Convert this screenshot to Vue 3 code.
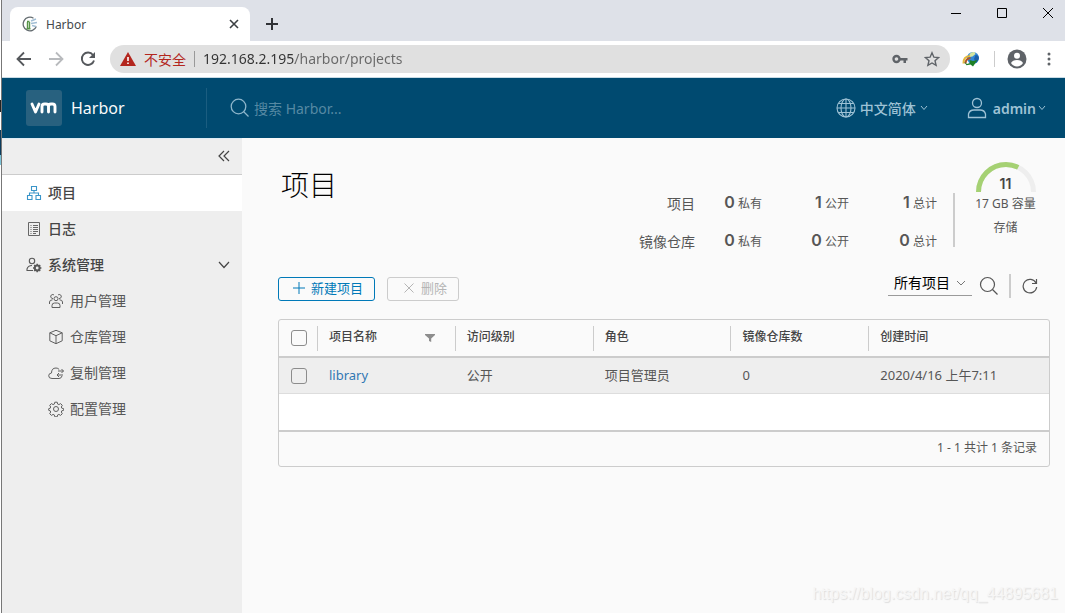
<script setup>
import { ref } from 'vue'

const address = ref('192.168.2.195/harbor/projects')
const keyword = ref('')
const filter = ref('all')

const subItems = [
  { id: 'users', label: '用户管理' },
  { id: 'registry', label: '仓库管理' },
  { id: 'replication', label: '复制管理' },
  { id: 'config', label: '配置管理' }
]

const stats = [
  { label: '项目', counts: [[0, '私有'], [1, '公开'], [1, '总计']] },
  { label: '镜像仓库', counts: [[0, '私有'], [0, '公开'], [0, '总计']] }
]

const columns = ['项目名称', '访问级别', '角色', '镜像仓库数', '创建时间']
const projects = [
  { name: 'library', access: '公开', role: '项目管理员', repos: 0, created: '2020/4/16 上午7:11' }
]
</script>

<template>
  <div class="window">
    <div class="edge"></div>
    <div class="browser">
      <div class="tabstrip">
        <div class="tab">
          <svg class="favicon" width="16" height="16" viewBox="0 0 16 16" fill="none">
            <path d="M14.300 10.500A6.800 6.800 0 1 1 11.500 2.200" stroke="#666e72" stroke-width="1.300" />
            <path d="M5 5.500h2.500M5.500 6v6.500h2V6M4.500 12.800h4" stroke="#579448" stroke-width="1.400" />
            <path d="M9 5l5-2M9 7.500l6-1M10 9.500l4 1" stroke="#a3bfd5" stroke-width="1.500" />
          </svg>
          <span class="tab-title">Harbor</span>
          <button class="plain" aria-label="关闭标签页">
            <svg width="10" height="10" viewBox="0 0 10 10" stroke="#3c4043" stroke-width="1.600"><path d="M1 1l8 8M9 1L1 9" /></svg>
          </button>
        </div>
        <button class="plain new-tab" aria-label="新标签页">
          <svg width="12" height="12" viewBox="0 0 12 12" stroke="#303236" stroke-width="2"><path d="M6 0v12M0 6h12" /></svg>
        </button>
        <div class="window-buttons">
          <button class="plain" aria-label="最小化"><svg width="12" height="12" viewBox="0 0 12 12" stroke="#000"><path d="M1 6.500h10" /></svg></button>
          <button class="plain" aria-label="最大化"><svg width="12" height="12" viewBox="0 0 12 12" fill="none" stroke="#000"><path d="M1.500 1.500h9v9h-9z" /></svg></button>
          <button class="plain" aria-label="关闭"><svg width="12" height="12" viewBox="0 0 12 12" stroke="#000"><path d="M1 1l10 10M11 1L1 11" /></svg></button>
        </div>
      </div>

      <div class="toolbar">
        <button class="plain" aria-label="后退">
          <svg width="16" height="16" viewBox="0 0 16 16" fill="none" stroke="#55585c" stroke-width="1.800"><path d="M15 8H2M8 1.500L1.500 8 8 14.500" /></svg>
        </button>
        <button class="plain" aria-label="前进">
          <svg width="16" height="16" viewBox="0 0 16 16" fill="none" stroke="#b8babd" stroke-width="1.800"><path d="M1 8h13M8 1.500L14.500 8 8 14.500" /></svg>
        </button>
        <button class="plain" aria-label="重新加载">
          <svg width="16" height="16" viewBox="0 0 16 16"><path d="M13 4A6.200 6.200 0 1 0 14 9.500" fill="none" stroke="#55585c" stroke-width="1.900" /><path d="M15 1v6H9z" fill="#55585c" /></svg>
        </button>
        <div class="omnibox">
          <svg width="16" height="14" viewBox="0 0 16 14"><path d="M8 0l8 14H0z" fill="#b3261e" /><path d="M8 5v4M8 10.500v1.600" stroke="#fff" stroke-width="1.600" /></svg>
          <span class="insecure">不安全</span>
          <input class="address" v-model="address" aria-label="地址栏" />
          <svg width="16" height="10" viewBox="0 0 16 10"><circle cx="4.500" cy="5" r="3" fill="none" stroke="#5f6368" stroke-width="2.400" /><path d="M8 4h7.500v2.400H14V9h-2.500V6.400H8z" fill="#5f6368" /></svg>
          <button class="plain" aria-label="收藏">
            <svg width="16" height="16" viewBox="0 0 16 16" fill="none" stroke="#5f6368" stroke-width="1.400"><path d="M8 1.800l1.900 4.400 4.700.4-3.600 3.100 1.100 4.700L8 12l-4.100 2.400L5 9.700 1.400 6.600l4.700-.4z" /></svg>
          </button>
        </div>
        <svg class="extension" width="18" height="16" viewBox="0 0 18 16">
          <circle cx="11" cy="7" r="6" fill="#2f86d6" />
          <path d="M7.500 3q2-2.500 5-2l1 2-3 2.500-3 .5z" fill="#d3e4a0" />
          <path d="M13.500 4q3 0 3.500 3-.5 3-3 4.500l-2-3.500z" fill="#1c5fa8" />
          <path d="M1.500 12.500Q1 5.500 8 5" fill="none" stroke="#e4b83b" stroke-width="2" />
          <path d="M3.500 12.500Q3.500 7.500 8.500 7" fill="none" stroke="#b05425" stroke-width="2" />
          <path d="M2 10.500l3 2.500 3-1-.5-3 3.500 1 4.500-1-4.500 6.500-2.500-2-4 .8z" fill="#1d7f25" />
        </svg>
        <span class="tool-divider"></span>
        <button class="plain profile" aria-label="用户资料">
          <svg width="20" height="20" viewBox="0 0 20 20"><circle cx="10" cy="10" r="9.500" fill="#5f6368" /><circle cx="10" cy="6.700" r="3" fill="#fff" /><path d="M4 14q1.500-3 6-3t6 3a7 7 0 0 1-12 0" fill="#fff" /></svg>
        </button>
        <button class="plain menu" aria-label="浏览器菜单">
          <svg width="4" height="14" viewBox="0 0 4 14" fill="#5f6368"><circle cx="2" cy="2" r="1.500" /><circle cx="2" cy="7" r="1.500" /><circle cx="2" cy="12" r="1.500" /></svg>
        </button>
      </div>

      <header class="header">
        <a class="brand" href="#">
          <span class="logo">
            <svg width="28" height="14" viewBox="0 0 28 14" fill="none" stroke="#fff" stroke-width="2.900" stroke-linecap="round" stroke-linejoin="round">
              <path d="M2 3l3.500 8L9 3M12 11V5.500Q12 3 14.500 3H16q2.500 0 2.500 2.500V11M18.500 5.500Q18.500 3 21 3h1.500Q25 3 25 5.500V11" />
            </svg>
          </span>
          <span>Harbor</span>
        </a>
        <label class="search">
          <svg width="20" height="20" viewBox="0 0 20 20" fill="none" stroke="#8eb6cb" stroke-width="1.300"><circle cx="8.500" cy="8.500" r="7.300" /><path d="M13.500 13.500l5 5" /></svg>
          <input v-model="keyword" placeholder="搜索 Harbor..." aria-label="搜索 Harbor" />
        </label>
        <button class="plain head-menu">
          <svg width="20" height="20" viewBox="0 0 20 20" fill="none" stroke="#9ec2d5" stroke-width="1.100"><circle cx="10" cy="10" r="9" /><ellipse cx="10" cy="10" rx="5" ry="9" /><path d="M10 1v18M1 10h18M2.500 5.500h15M2.500 14.500h15" /></svg>
          <span>中文简体</span>
          <svg width="8" height="6" viewBox="0 0 8 6" fill="none" stroke="#9ec2d5"><path d="M1 1l3 3.500L7 1" /></svg>
        </button>
        <button class="plain head-menu admin">
          <svg width="20" height="22" viewBox="0 0 20 22" fill="none" stroke="#9ec2d5" stroke-width="1.300"><circle cx="10" cy="6" r="4.500" /><path d="M1.500 20.500V17q1-4 5.500-4h6q4.500 0 5.500 4v3.500z" /></svg>
          <span class="user-name">admin</span>
          <svg width="8" height="6" viewBox="0 0 8 6" fill="none" stroke="#9ec2d5"><path d="M1 1l3 3.500L7 1" /></svg>
        </button>
      </header>

      <div class="content">
        <nav class="sidebar">
          <div class="collapse">
            <button class="plain" aria-label="收起导航">
              <svg width="12" height="12" viewBox="0 0 12 12" fill="none" stroke="#444" stroke-width="1.200"><path d="M6 1L1 6l5 5M11 1L6 6l5 5" /></svg>
            </button>
          </div>
          <a class="item active" href="#">
            <svg width="16" height="16" viewBox="0 0 16 16" fill="none" stroke="#3a95c9" stroke-width="1.100"><path d="M5.500 1.500h5v4h-5zM1.500 10.500h4.500v4H1.500zM10 10.500h4.500v4H10zM8 5.500V8M3.500 10V8h9v2" /></svg>
            <span>项目</span>
          </a>
          <a class="item" href="#">
            <svg width="16" height="16" viewBox="0 0 16 16" fill="none" stroke="#666"><path d="M2.500 1.500h11v13h-11zM4.500 4.500h1M7 4.500h5M4.500 6.500h1M7 6.500h5M4.500 8.500h1M7 8.500h5M4.500 10.500h1M7 10.500h5M4.500 12.500h1M7 12.500h3" /></svg>
            <span>日志</span>
          </a>
          <button class="plain item">
            <svg width="16" height="16" viewBox="0 0 16 16" fill="none" stroke="#595959" stroke-width="1.100"><circle cx="6" cy="4" r="2.700" /><path d="M7 13.500H1V12q1-3.500 5-3.500" /><circle cx="11.200" cy="11" r="2.400" stroke-width="2" /><path d="M11.200 6.800v2M11.200 13.200v2M7 11h2M13.400 11h2M8.200 8l1.400 1.400M12.800 12.600l1.400 1.400M14.200 8l-1.400 1.400M9.600 12.600L8.200 14" stroke-width="1.500" /></svg>
            <span class="item-name">系统管理</span>
            <svg width="12" height="8" viewBox="0 0 12 8" fill="none" stroke="#444" stroke-width="1.200"><path d="M1 1l5 5.500L11 1" /></svg>
          </button>
          <a v-for="s in subItems" :key="s.id" class="item sub" href="#">
            <svg width="16" height="16" viewBox="0 0 16 16" fill="none" stroke="#606060">
              <g v-if="s.id === 'users'"><circle cx="8" cy="5.700" r="2" /><path d="M4 14.500v-2q0-2.500 2.500-2.500h3q2.500 0 2.500 2.500v2zM5 5.500a2 2 0 1 1 1-3.500M11 5.500A2 2 0 1 0 10 2M1.500 11V9q0-2 3-2.200M14.500 11V9q0-2-3-2.200" /></g>
              <path v-else-if="s.id === 'registry'" d="M8 1.300l6.200 2.500v8L8 14.700l-6.200-2.900v-8zM1.800 3.800L8 6.700l6.200-2.900M8 6.700v8" />
              <path v-else-if="s.id === 'replication'" d="M14 11q-.7 2.500-3 2.500H4q-3.300 0-3.300-2.700Q.700 8.300 3.500 8q0-5 4.500-5 2 0 3.200 1.500M15.500 6H10M13.500 4l2 2-2 2M15 10H9M11 8l-2 2 2 2" />
              <g v-else><circle cx="8" cy="8" r="2.500" /><path d="M6.800 1.200h2.400l.5 1.900 1.200.5 1.700-1 1.700 1.700-1 1.700.5 1.200 1.900.5v1.600l-1.900.5-.5 1.200 1 1.700-1.700 1.700-1.700-1-1.200.5-.5 1.900H6.800l-.5-1.900-1.200-.5-1.700 1-1.700-1.700 1-1.700-.5-1.200-1.500-.5V7.700l1.500-.5.500-1.200-1-1.700 1.700-1.700 1.700 1 1.200-.5z" /></g>
            </svg>
            <span>{{ s.label }}</span>
          </a>
        </nav>

        <main class="main">
          <section class="summary">
            <h1>项目</h1>
            <div class="stats">
              <template v-for="row in stats" :key="row.label">
                <span class="stat-label">{{ row.label }}</span>
                <span v-for="c in row.counts" :key="c[1]" class="stat"><b>{{ c[0] }}</b> {{ c[1] }}</span>
              </template>
            </div>
            <div class="quota">
              <div class="gauge">
                <svg width="60" height="30" viewBox="0 0 60 30" fill="none" stroke-width="5">
                  <path d="M2.500 30a27.500 27.500 0 0 1 55 0" stroke="#eee" />
                  <path d="M2.500 30a27.500 27.500 0 0 1 55 0" stroke="#a5d173" pathLength="17" stroke-dasharray="11 17" />
                </svg>
                <b>11</b>
              </div>
              <span>17 GB 容量</span>
              <span>存储</span>
            </div>
          </section>

          <div class="actions">
            <button class="btn primary">
              <svg width="12" height="12" viewBox="0 0 12 12" stroke="currentColor"><path d="M6 0v12M0 6h12" /></svg>新建项目
            </button>
            <button class="btn" disabled>
              <svg width="12" height="12" viewBox="0 0 12 12" stroke="currentColor"><path d="M1.500 1.500l9 9M10.500 1.500l-9 9" /></svg>删除
            </button>
            <div class="filter">
              <select v-model="filter" aria-label="项目筛选">
                <option value="all">所有项目</option>
              </select>
              <svg width="8" height="6" viewBox="0 0 8 6" fill="none" stroke="#777"><path d="M0 1l4 4 4-4" /></svg>
            </div>
            <button class="plain find" aria-label="搜索项目">
              <svg width="20" height="20" viewBox="0 0 20 20" fill="none" stroke="#555" stroke-width="1.200"><circle cx="8.500" cy="8.500" r="7" /><path d="M13.500 13.500l5 5" /></svg>
            </button>
            <span class="action-divider"></span>
            <button class="plain refresh" aria-label="刷新">
              <svg width="16" height="16" viewBox="0 0 16 16" fill="none" stroke="#555" stroke-width="1.200"><path d="M14 5A6.800 6.800 0 1 0 14.700 9M14.500 1v4.500H10" /></svg>
            </button>
          </div>

          <div class="datagrid">
            <table>
              <colgroup><col class="c-check" /><col v-for="n in 4" :key="n" class="c-data" /><col /></colgroup>
              <thead>
                <tr>
                  <th class="check"><input type="checkbox" aria-label="全选" /></th>
                  <th v-for="(c, i) in columns" :key="c" scope="col">
                    <div class="th">
                      <span>{{ c }}</span>
                      <button v-if="i === 0" class="plain" aria-label="筛选项目名称">
                        <svg width="10" height="8" viewBox="0 0 10 8" fill="#8d8d8d"><path d="M0 0h10v1L6.200 4.500V8L4 7V4.500L0 1z" /></svg>
                      </button>
                    </div>
                  </th>
                </tr>
              </thead>
              <tbody>
                <tr v-for="p in projects" :key="p.name">
                  <td class="check"><input type="checkbox" :aria-label="p.name" /></td>
                  <td><a href="#">{{ p.name }}</a></td>
                  <td>{{ p.access }}</td>
                  <td>{{ p.role }}</td>
                  <td>{{ p.repos }}</td>
                  <td>{{ p.created }}</td>
                </tr>
              </tbody>
            </table>
            <div class="grid-space"></div>
            <div class="grid-footer">1 - 1 共计 1 条记录</div>
          </div>
        </main>
      </div>
    </div>
    <span class="watermark">https://blog.csdn.net/qq_44895681</span>
  </div>
</template>

<style>
body {
  background: #fafafa;
}
</style>

<style scoped>
* {
  box-sizing: border-box;
}
.window {
  position: relative;
  display: flex;
  min-height: 100vh;
  overflow: hidden;
  font-family: "Noto Sans", "Noto Sans CJK SC", sans-serif;
  font-size: 14px;
  color: #565656;
}
.edge {
  width: 2px;
  flex: none;
  border-right: 1px solid #777;
  background: linear-gradient(#fff 100px, #222 100px 112px, #fff 112px 130px, #0b3b5c 130px 155px, #7cc4d8 155px 165px, #fff 165px);
}
.browser {
  flex: 1;
  min-width: 0;
  display: flex;
  flex-direction: column;
}
svg {
  display: block;
  flex: none;
}
.plain {
  display: flex;
  align-items: center;
  padding: 0;
  border: 0;
  background: none;
  font: inherit;
  color: inherit;
}
a {
  color: inherit;
  text-decoration: none;
}

.tabstrip {
  display: flex;
  height: 41px;
  padding-left: 8px;
  background: #dee1e8;
}
.tab {
  display: flex;
  align-items: center;
  width: 240px;
  margin-top: 7px;
  padding: 0 11px 0 12px;
  border-radius: 8px 8px 0 0;
  background: #fff;
  font-size: 12px;
  color: #45494d;
}
.tab-title {
  flex: 1;
  margin-left: 8px;
}
.new-tab {
  margin: 7px 0 0 16px;
}
.window-buttons {
  display: flex;
  gap: 34px;
  height: 26px;
  margin-left: auto;
  padding-right: 11px;
}

.toolbar {
  display: flex;
  align-items: center;
  height: 37px;
  padding: 0 14px;
  gap: 16px;
  border-bottom: 1px solid #c9dbe5;
  background: #fff;
}
.omnibox {
  flex: 1;
  display: flex;
  align-items: center;
  height: 28px;
  margin-left: -2px;
  padding: 0 10px;
  border-radius: 14px;
  background: #e0e0e0;
}
.omnibox > .plain {
  margin-left: 16px;
}
.insecure {
  margin: 0 8px;
  color: #b3261e;
}
.address {
  flex: 1;
  min-width: 0;
  height: 16px;
  padding: 0 0 0 8px;
  border: 0;
  border-left: 1px solid #999;
  outline: 0;
  font: inherit;
  line-height: 16px;
  color: #333;
  background: linear-gradient(90deg, #333 100px, #686868 100px);
  background-clip: text;
  -webkit-text-fill-color: transparent;
}
.extension {
  margin-left: -4px;
}
.tool-divider {
  width: 1px;
  height: 16px;
  margin-left: -2px;
  background: #ccc;
}
.profile {
  margin: 0 4px 0 -4px;
}

.header {
  display: flex;
  align-items: center;
  height: 60px;
  padding: 0 19px 0 24px;
  background: #004a70;
  color: #9ec2d5;
}
.brand {
  display: flex;
  align-items: center;
  gap: 9px;
  width: 181px;
  height: 40px;
  border-right: 1px solid #1b5d80;
  font-size: 16px;
  color: #fafafa;
}
.logo {
  display: grid;
  place-items: center;
  width: 36px;
  height: 36px;
  border-radius: 3px;
  background: #28617f;
}
.search {
  flex: 1;
  display: flex;
  align-items: center;
  gap: 4px;
  margin-left: 23px;
}
.search input {
  flex: 1;
  min-width: 0;
  padding: 0;
  border: 0;
  outline: 0;
  background: none;
  font: inherit;
  color: #fff;
}
.search input::placeholder {
  color: #5689a3;
}
.head-menu {
  gap: 4px;
  font-weight: 500;
}
.admin {
  gap: 2px;
  margin-left: 39px;
  font-weight: 600;
}
.user-name {
  margin-left: 4px;
}

.content {
  flex: 1;
  display: flex;
}
.sidebar {
  flex: none;
  width: 240px;
  border-top: 1px solid #dcecf5;
  background: #eee;
}
.collapse {
  display: flex;
  justify-content: flex-end;
  height: 36px;
  padding: 0 12px 2px 0;
  border-bottom: 1px solid #ccc;
}
.item {
  display: flex;
  align-items: center;
  gap: 6px;
  width: 100%;
  height: 36px;
  padding: 0 12px 0 24px;
  font-weight: 500;
  text-align: left;
  color: #454545;
}
.item span {
  padding-bottom: 2px;
}
.active {
  background: #fff;
}
.item-name {
  flex: 1;
}
.sub {
  padding-left: 46px;
  font-weight: 400;
  color: #565656;
}

.main {
  flex: 1;
  min-width: 0;
  padding: 24px 15px 24px 36px;
  background: #fafafa;
}
.summary {
  display: flex;
  height: 92px;
}
h1 {
  flex: 1;
  margin: 3px 0 0 3px;
  font-size: 28px;
  font-weight: 300;
  line-height: 40px;
  color: #000;
}
.stats {
  display: grid;
  grid-template-columns: auto 67px 87px 88px;
  grid-template-rows: 38px 38px;
  align-items: center;
  align-self: flex-start;
  margin-top: 22px;
  text-align: right;
}
.stat {
  padding-bottom: 2px;
  font-size: 12px;
}
.stat b {
  font-family: Inter, sans-serif;
  font-size: 16px;
  font-weight: 600;
}
.quota {
  display: flex;
  flex-direction: column;
  align-items: center;
  width: 97px;
  margin-left: 16px;
  padding-left: 8px;
  font-size: 12px;
  line-height: 24px;
  background: linear-gradient(#ccc, #ccc) 0 31px / 2px 54px no-repeat;
}
.gauge {
  position: relative;
  text-align: center;
}
.gauge b {
  position: absolute;
  inset: 10px 0 0;
  font-family: Inter, sans-serif;
  font-size: 14px;
  font-weight: 600;
  color: #454545;
}

.actions {
  display: flex;
  align-items: center;
  margin-top: 17px;
}
.btn {
  display: flex;
  align-items: center;
  gap: 6px;
  height: 24px;
  margin: 6px 12px 0 0;
  padding: 0 11px 2px 15px;
  border: 1px solid #ccc;
  border-radius: 3px;
  background: none;
  font: inherit;
  font-size: 13px;
  line-height: 20px;
  color: #b5b5b5;
}
.primary {
  padding-left: 14px;
  border-color: #0079b8;
  color: #0079b8;
}
.filter {
  display: flex;
  align-items: center;
  width: 84px;
  height: 24px;
  margin: 0 0 4px auto;
  padding: 0 7px 2px 0;
  border-bottom: 1px solid #9a9a9a;
}
.filter select {
  flex: 1;
  min-width: 0;
  padding: 0 0 0 6px;
  border: 0;
  outline: 0;
  appearance: none;
  background: none;
  font: inherit;
  color: #000;
}
.find {
  margin-left: 7px;
}
.action-divider {
  width: 2px;
  height: 24px;
  margin: 0 11px 0 10px;
  background: #ccc;
}
.refresh {
  margin-right: 12px;
}

.datagrid {
  margin-top: 18px;
  border: 1px solid #ccc;
  border-radius: 3px;
}
table {
  width: 100%;
  table-layout: fixed;
  border-collapse: separate;
  border-spacing: 0;
  font-size: 13px;
}
.c-check {
  width: 38px;
}
.c-data {
  width: 17.9%;
}
th,
td {
  padding: 0 12px 2px;
  text-align: left;
}
th {
  height: 38px;
  padding-bottom: 4px;
  border-bottom: 2px solid #ccc;
  font-size: 12px;
  font-weight: 500;
  color: #454545;
}
th + th {
  background: linear-gradient(#ccc, #ccc) 0 6px / 1px 25px no-repeat;
}
.th {
  display: flex;
  align-items: center;
  justify-content: space-between;
  padding-right: 8px;
}
.th .plain {
  padding-top: 3px;
}
td {
  height: 36px;
  border-bottom: 1px solid #ddd;
  background: #eee;
}
td a {
  color: #3278b3;
}
.check {
  padding: 0 0 0 12px;
}
.check input {
  appearance: none;
  display: block;
  width: 16px;
  height: 16px;
  margin: 0;
  border: 1px solid #8c8c8c;
  border-radius: 3px;
}
.grid-space {
  height: 38px;
  border-bottom: 2px solid #ccc;
  background: #fff;
}
.grid-footer {
  padding: 0 12px 2px;
  font-size: 12px;
  line-height: 32px;
  text-align: right;
}
.watermark {
  position: absolute;
  right: 7px;
  bottom: 9px;
  font-family: "Liberation Sans", sans-serif;
  font-size: 16px;
  line-height: 20px;
  color: #f6f6f6;
  text-shadow: 1px 1px 1px #ddd;
}
</style>
